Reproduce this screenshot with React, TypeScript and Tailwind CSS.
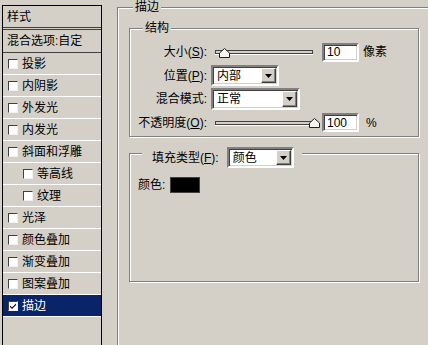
import React from "react";

const FONT = { fontFamily: '"Liberation Sans","Noto Sans CJK SC",sans-serif' };

function Check({ checked }: { checked?: boolean }) {
  return (
    <div className="w-[10px] h-[10px] flex-none bg-white border-t border-l border-t-[#404040] border-l-[#404040] border-r border-b border-r-[#f0f0f0] border-b-[#f0f0f0] flex items-center justify-center">
      {checked && (
        <svg width="8" height="8" viewBox="0 0 8 8">
          <path d="M1 3.5 L3 5.5 L7 1.5 L7 3 L3 7 L1 5 Z" fill="#000" />
        </svg>
      )}
    </div>
  );
}

const items: { t: string; indent?: boolean; sel?: boolean }[] = [
  { t: "投影" },
  { t: "内阴影" },
  { t: "外发光" },
  { t: "内发光" },
  { t: "斜面和浮雕" },
  { t: "等高线", indent: true },
  { t: "纹理", indent: true },
  { t: "光泽" },
  { t: "颜色叠加" },
  { t: "渐变叠加" },
  { t: "图案叠加" },
  { t: "描边", sel: true },
];

function Arrow() {
  return (
    <div className="w-[15px] flex-none self-stretch m-[1px] bg-[#d4d0c8] border border-t-white border-l-white border-r-[#404040] border-b-[#404040] shadow-[inset_-1px_-1px_0_#808080] flex items-center justify-center">
      <svg width="7" height="4" viewBox="0 0 7 4">
        <path d="M0 0 H7 L3.5 4 Z" fill="#000" />
      </svg>
    </div>
  );
}

function Dropdown({ w, h, text }: { w: string; h: string; text: string }) {
  return (
    <div
      className={`${w} ${h} flex-none bg-white border-2 border-t-[#808080] border-l-[#808080] border-b-white border-r-white shadow-[inset_1px_1px_0_#404040,inset_-1px_-1px_0_#d4d0c8] flex items-stretch`}
    >
      <div className="flex-1 flex items-center pl-[4px] text-[12px] leading-none">{text}</div>
      <Arrow />
    </div>
  );
}

function Slider({ pos }: { pos: number }) {
  return (
    <div className="relative w-[107px] h-[23px] flex-none flex items-center pl-[4px] pr-[5px]">
      <div className="w-full h-[4px] bg-[#d4d0c8] border border-[#404040] shadow-[0_1px_0_#fff]" />
      <svg
        className="absolute top-[7px]"
        style={{ left: pos }}
        width="11"
        height="10"
        viewBox="0 0 11 10"
      >
        <path d="M0.5 9.5 V5 L5.5 0.5 L10.5 5 V9.5 Z" fill="#f4f4f0" stroke="#202020" strokeWidth="1" />
      </svg>
    </div>
  );
}

function Input({ v }: { v: string }) {
  return (
    <div className="ml-[4px] w-[37px] h-[19px] flex-none bg-white border-2 border-t-[#808080] border-l-[#808080] border-b-white border-r-white shadow-[inset_1px_1px_0_#404040,inset_-1px_-1px_0_#d4d0c8] flex items-center pl-[3px] text-[12px] leading-none">
      {v}
    </div>
  );
}

function Group({
  h,
  mt,
  legend,
  children,
}: {
  h: string;
  mt: string;
  legend: React.ReactNode;
  children?: React.ReactNode;
}) {
  return (
    <div
      className={`relative ml-[11px] ${mt} w-[290px] ${h} flex-none border border-[#808080] shadow-[inset_1px_1px_0_#fff,1px_1px_0_#fff]`}
    >
      {legend}
      {children}
    </div>
  );
}

function U({ c }: { c: string }) {
  return <span className="underline underline-offset-[1px]">{c}</span>;
}

export default function App() {
  return (
    <div
      className="w-[428px] h-[345px] overflow-hidden bg-[#d4d0c8] flex items-start text-black text-[12px]"
      style={FONT}
    >
      {/* left list panel */}
      <div className="mt-[5px] ml-[2px] w-[100px] h-[345px] flex-none border-t border-x border-black flex flex-col">
        <div className="h-[21px] flex items-center pl-[4px] leading-none">样式</div>
        <div className="h-[3px] border-y border-[#404040]" />
        <div className="h-[23px] flex items-center pl-[4px] border-b border-[#404040] leading-none">
          混合选项:自定
        </div>
        {items.map((it) => (
          <div
            key={it.t}
            className={`h-[22px] flex-none flex items-center gap-[4px] border-b border-white leading-none ${
              it.indent ? "pl-[20px]" : "pl-[5px]"
            } ${it.sel ? "bg-[#0a246a] text-white" : ""}`}
          >
            <Check checked={it.sel} />
            <span>{it.t}</span>
          </div>
        ))}
      </div>

      {/* outer group 描边 */}
      <div className="relative ml-[15px] mt-[7px] w-[330px] h-[360px] flex-none border border-[#808080] shadow-[inset_1px_1px_0_#fff] flex flex-col">
        <div className="absolute left-[15px] top-[-8px] px-[2px] bg-[#d4d0c8] leading-[14px]">描边</div>

        <Group
          h="h-[109px]"
          mt="mt-[20px]"
          legend={
            <div className="absolute left-[13px] top-[-8px] px-[2px] bg-[#d4d0c8] leading-[14px]">结构</div>
          }
        >
          <div className="pt-[11px] flex flex-col">
            <div className="h-[24px] flex items-center">
              <div className="w-[77px] text-right leading-none">
                大小(<U c="S" />):
              </div>
              <div className="ml-[4px] flex items-center">
                <Slider pos={8} />
                <Input v="10" />
                <span className="ml-[4px] leading-none">像素</span>
              </div>
            </div>
            <div className="h-[23px] flex items-center">
              <div className="w-[77px] text-right leading-none">
                位置(<U c="P" />):
              </div>
              <div className="ml-[4px]">
                <Dropdown w="w-[68px]" h="h-[21px]" text="内部" />
              </div>
            </div>
            <div className="h-[24px] flex items-center">
              <div className="w-[77px] text-right leading-none">混合模式:</div>
              <div className="ml-[4px]">
                <Dropdown w="w-[89px]" h="h-[22px]" text="正常" />
              </div>
            </div>
            <div className="h-[23px] flex items-center">
              <div className="w-[77px] text-right leading-none whitespace-nowrap">
                不透明度(<U c="O" />):
              </div>
              <div className="ml-[4px] flex items-center">
                <Slider pos={98} />
                <Input v="100" />
                <span className="ml-[7px] leading-none">%</span>
              </div>
            </div>
          </div>
        </Group>

        <Group
          h="h-[129px]"
          mt="mt-[16px]"
          legend={
            <div className="absolute left-[12px] top-[-7px] bg-[#d4d0c8] pl-[10px] pr-[8px] flex items-center">
              <span className="leading-none">
                填充类型(<U c="F" />):
              </span>
              <div className="ml-[8px]">
                <Dropdown w="w-[67px]" h="h-[21px]" text="颜色" />
              </div>
            </div>
          }
        >
          <div className="mt-[23px] pl-[8px] h-[16px] flex items-center">
            <span className="leading-none">颜色:</span>
            <div className="ml-[5px] w-[30px] h-[16px] bg-black border border-[#404040]" />
          </div>
        </Group>
      </div>
    </div>
  );
}
